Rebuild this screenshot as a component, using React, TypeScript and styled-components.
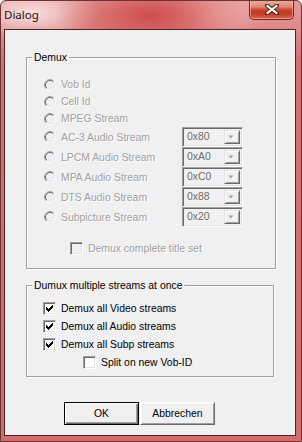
import React from 'react';
import styled, { createGlobalStyle } from 'styled-components';

const Global = createGlobalStyle`
  html, body { margin: 0; padding: 0; background: #ffffff; }
  body { width: 302px; height: 442px; overflow: hidden; }
  * { box-sizing: border-box; }
`;

const Window = styled.div`
  width: 302px;
  height: 442px;
  display: flex;
  flex-direction: column;
  border: 1px solid #6a3434;
  border-radius: 6px 6px 0 0;
  background:
    radial-gradient(ellipse 95px 40px at 150px 14px, rgba(206, 70, 70, 0.9), rgba(206, 70, 70, 0) 100%),
    radial-gradient(ellipse 70px 30px at 30px 12px, rgba(255, 236, 236, 0.85), rgba(255, 236, 236, 0) 100%),
    radial-gradient(ellipse 50px 26px at 215px 12px, rgba(245, 190, 190, 0.7), rgba(245, 190, 190, 0) 100%),
    linear-gradient(180deg, #e49a9a 0px, #de8686 30px, #d67070 60px, #d46a6a 100%);
  overflow: hidden;
`;

const TitleBar = styled.div`
  height: 28px;
  flex: none;
  display: flex;
  justify-content: space-between;
  align-items: flex-start;
  padding: 0 7px 0 3px;
`;

const Title = styled.span`
  font-family: 'Noto Sans', 'Open Sans', sans-serif;
  font-size: 11.5px;
  line-height: 14px;
  margin-top: 7px;
  color: #1a1010;
  text-shadow: 0 0 6px rgba(255, 240, 240, 0.9);
`;

const CloseButton = styled.div`
  width: 45px;
  height: 20px;
  margin-top: -1px;
  border: 1px solid #6c2a22;
  border-top: none;
  border-radius: 0 0 5px 5px;
  display: flex;
  align-items: center;
  justify-content: center;
  background: linear-gradient(180deg, #eab0a0 0%, #e08a74 35%, #c8452c 52%, #c23a22 70%, #d8654a 100%);
  box-shadow: inset 0 0 0 1px rgba(255, 200, 190, 0.55);
`;

const Frame = styled.div`
  flex: 1;
  display: flex;
  padding: 0 5px 5px 3px;
`;

const Client = styled.div`
  flex: 1;
  display: flex;
  flex-direction: column;
  background: #f0f0f0;
  border: 1px solid #4a2424;
  font-family: 'Liberation Sans', Arial, sans-serif;
  font-size: 10.4px;
  color: #000;
`;

const Group = styled.fieldset<{ $top: number; $width: number }>`
  margin: ${p => p.$top}px 0 0 21px;
  width: ${p => p.$width}px;
  padding: 0;
  min-width: 0;
  border: 1px solid #a0a0a0;
  box-shadow: 1px 1px 0 #ffffff, inset 1px 1px 0 #ffffff;
`;

const Legend = styled.legend`
  margin-left: 5px;
  padding: 0 2px;
  line-height: 13px;
  background: #f0f0f0;
  color: #000;
`;

const GroupBody = styled.div<{ $pt: number; $pb: number }>`
  display: flex;
  flex-direction: column;
  padding: ${p => p.$pt}px 0 ${p => p.$pb}px 0;
`;

const Row = styled.div<{ $h: number; $indent: number; $mt?: number }>`
  height: ${p => p.$h}px;
  display: flex;
  align-items: center;
  padding-left: ${p => p.$indent}px;
  margin-top: ${p => p.$mt ?? 0}px;
`;

const Label = styled.span<{ $disabled?: boolean }>`
  flex: 1;
  margin-left: 5px;
  line-height: 13px;
  white-space: nowrap;
  color: ${p => (p.$disabled ? '#a0a0a0' : '#000000')};
  text-shadow: ${p => (p.$disabled ? '1px 1px 0 #ffffff' : 'none')};
`;

const RadioSvg = styled.svg`
  width: 12px;
  height: 12px;
  flex: none;
  display: block;
`;

const CheckBox = styled.span<{ $disabled?: boolean }>`
  width: 13px;
  height: 13px;
  flex: none;
  display: flex;
  align-items: center;
  justify-content: center;
  border: 1px solid;
  border-color: #a0a0a0 #ffffff #ffffff #a0a0a0;
  box-shadow: inset 1px 1px 0 #696969, inset -1px -1px 0 #e3e3e3;
  background: ${p => (p.$disabled ? '#f0f0f0' : '#ffffff')};
`;

const Combo = styled.div`
  width: 61px;
  height: 20px;
  margin-right: 32px;
  flex: none;
  display: flex;
  align-items: stretch;
  border: 1px solid;
  border-color: #a0a0a0 #ffffff #ffffff #a0a0a0;
  box-shadow: inset 1px 1px 0 #696969, inset -1px -1px 0 #e3e3e3;
  background: #f0f0f0;
  padding: 2px;
`;

const ComboText = styled.span`
  flex: 1;
  padding-left: 2px;
  line-height: 14px;
  color: #6d6d6d;
`;

const ComboArrow = styled.span`
  width: 16px;
  flex: none;
  display: flex;
  align-items: center;
  justify-content: center;
  border: 1px solid;
  border-color: #e3e3e3 #696969 #696969 #e3e3e3;
  box-shadow: inset 1px 1px 0 #ffffff, inset -1px -1px 0 #a0a0a0;
  background: #f0f0f0;
`;

const ButtonRow = styled.div`
  display: flex;
  gap: 1px;
  margin-top: 25px;
  padding-left: 59px;
`;

const Button = styled.div<{ $default?: boolean }>`
  width: 75px;
  height: 23px;
  display: flex;
  align-items: center;
  justify-content: center;
  border: 1px solid;
  border-color: ${p => (p.$default ? '#000000' : '#ffffff #696969 #696969 #ffffff')};
  box-shadow: ${p =>
    p.$default
      ? 'inset 1px 1px 0 #ffffff, inset -1px -1px 0 #696969, inset -2px -2px 0 #a0a0a0'
      : 'inset 1px 1px 0 #f8f8f8, inset -1px -1px 0 #a0a0a0'};
  background: #f0f0f0;
  font-size: 10.4px;
  color: #000;
`;

const Radio = () => (
  <RadioSvg viewBox="0 0 12 12">
    <circle cx="6" cy="6" r="4.5" fill="#f0f0f0" />
    <path d="M2.11 9.89 A5.5 5.5 0 0 1 9.89 2.11" fill="none" stroke="#a0a0a0" strokeWidth="1" />
    <path d="M9.89 2.11 A5.5 5.5 0 0 1 2.11 9.89" fill="none" stroke="#ffffff" strokeWidth="1" />
    <path d="M2.82 9.18 A4.5 4.5 0 0 1 9.18 2.82" fill="none" stroke="#696969" strokeWidth="1" />
    <path d="M9.18 2.82 A4.5 4.5 0 0 1 2.82 9.18" fill="none" stroke="#e3e3e3" strokeWidth="1" />
  </RadioSvg>
);

const Check = () => (
  <svg width="7" height="7" viewBox="0 0 7 7" style={{ display: 'block' }}>
    <path
      d="M0 2h1v3h-1zM1 3h1v3h-1zM2 4h1v3h-1zM3 3h1v3h-1zM4 2h1v3h-1zM5 1h1v3h-1zM6 0h1v3h-1z"
      fill="#000"
    />
  </svg>
);

const ComboArrowIcon = () => (
  <svg width="8" height="5" viewBox="0 0 8 5" style={{ display: 'block' }}>
    <path d="M1 1h5l-2.5 3z" fill="#ffffff" />
    <path d="M0 0h5l-2.5 3z" fill="#a0a0a0" transform="translate(0.5 0.5)" />
  </svg>
);

const CloseGlyph = () => (
  <svg width="14" height="11" viewBox="0 0 14 11" style={{ display: 'block' }}>
    <path
      d="M2 1.5 L12 9.5 M12 1.5 L2 9.5"
      stroke="#4a1a14"
      strokeWidth="4"
      strokeLinecap="square"
    />
    <path d="M2.5 2 L11.5 9 M11.5 2 L2.5 9" stroke="#ffffff" strokeWidth="2.2" strokeLinecap="square" />
  </svg>
);

const plainRadios = ['Vob Id', 'Cell Id', 'MPEG Stream'];
const comboRadios: [string, string][] = [
  ['AC-3 Audio Stream', '0x80'],
  ['LPCM Audio Stream', '0xA0'],
  ['MPA Audio Stream', '0xC0'],
  ['DTS Audio Stream', '0x88'],
  ['Subpicture Stream', '0x20'],
];

const multi = ['Demux all Video streams', 'Demux all Audio streams', 'Demux all Subp streams'];

export default function App() {
  return (
    <>
      <Global />
      <Window>
        <TitleBar>
          <Title>Dialog</Title>
          <CloseButton>
            <CloseGlyph />
          </CloseButton>
        </TitleBar>
        <Frame>
          <Client>
            <Group $top={21} $width={250}>
              <Legend>Demux</Legend>
              <GroupBody $pt={12} $pb={12}>
                {plainRadios.map(t => (
                  <Row key={t} $h={17} $indent={17}>
                    <Radio />
                    <Label $disabled>{t}</Label>
                  </Row>
                ))}
                {comboRadios.map(([t, v]) => (
                  <Row key={t} $h={20} $indent={17}>
                    <Radio />
                    <Label $disabled>{t}</Label>
                    <Combo>
                      <ComboText>{v}</ComboText>
                      <ComboArrow>
                        <ComboArrowIcon />
                      </ComboArrow>
                    </Combo>
                  </Row>
                ))}
                <Row $h={16} $indent={43} $mt={13}>
                  <CheckBox $disabled />
                  <Label $disabled>Demux complete title set</Label>
                </Row>
              </GroupBody>
            </Group>
            <Group $top={10} $width={248}>
              <Legend>Dumux multiple streams at once</Legend>
              <GroupBody $pt={7} $pb={5}>
                {multi.map(t => (
                  <Row key={t} $h={18} $indent={16}>
                    <CheckBox>
                      <Check />
                    </CheckBox>
                    <Label>{t}</Label>
                  </Row>
                ))}
                <Row $h={18} $indent={56}>
                  <CheckBox />
                  <Label>Split on new Vob-ID</Label>
                </Row>
              </GroupBody>
            </Group>
            <ButtonRow>
              <Button $default>OK</Button>
              <Button>Abbrechen</Button>
            </ButtonRow>
          </Client>
        </Frame>
      </Window>
    </>
  );
}
